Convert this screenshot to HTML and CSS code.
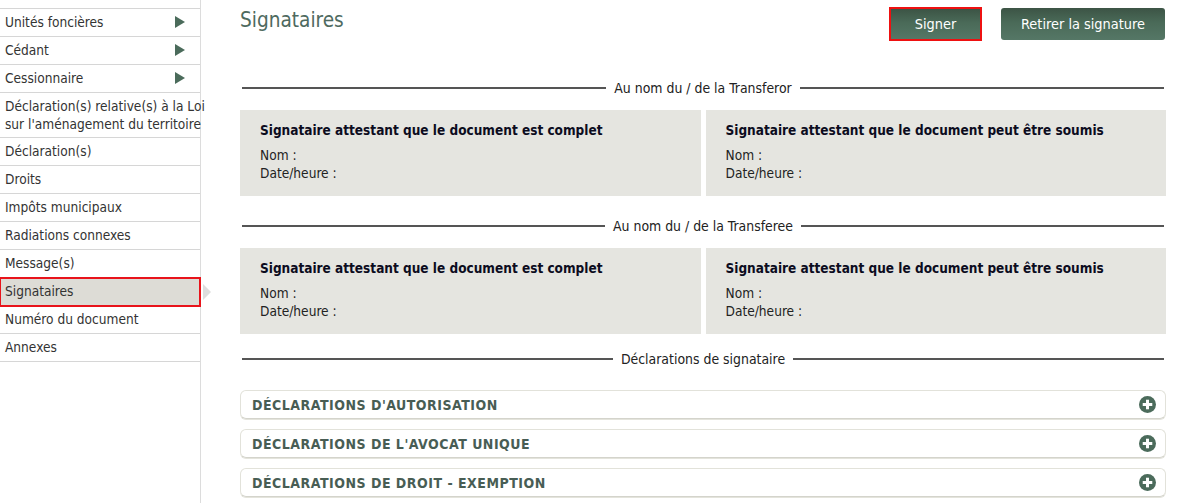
FILE: index.html
```html
<!DOCTYPE html>
<html lang="fr">
<head>
<meta charset="utf-8">
<title>Signataires</title>
<link rel="stylesheet" href="styles.css">
</head>
<body>
<div class="page">
  <nav class="sidebar">
    <ul class="nav">
      <li class="nav-item has-sub">Unités foncières<span class="tri"></span></li>
      <li class="nav-item has-sub">Cédant<span class="tri"></span></li>
      <li class="nav-item has-sub">Cessionnaire<span class="tri"></span></li>
      <li class="nav-item two-line">Déclaration(s) relative(s) à la Loi<br>sur l'aménagement du territoire</li>
      <li class="nav-item">Déclaration(s)</li>
      <li class="nav-item">Droits</li>
      <li class="nav-item">Impôts municipaux</li>
      <li class="nav-item">Radiations connexes</li>
      <li class="nav-item">Message(s)</li>
      <li class="nav-item active">Signataires<span class="pointer"></span></li>
      <li class="nav-item">Numéro du document</li>
      <li class="nav-item">Annexes</li>
    </ul>
  </nav>
  <main class="main">
    <div class="header">
      <h1 class="title">Signataires</h1>
      <div class="actions">
        <button class="btn btn-focus">Signer</button>
        <button class="btn">Retirer la signature</button>
      </div>
    </div>

    <div class="divider first"><span>Au nom du / de la Transferor</span></div>
    <div class="cards">
      <div class="card">
        <div class="card-title">Signataire attestant que le document est complet</div>
        <div class="card-line">Nom :</div>
        <div class="card-line">Date/heure :</div>
      </div>
      <div class="card">
        <div class="card-title">Signataire attestant que le document peut être soumis</div>
        <div class="card-line">Nom :</div>
        <div class="card-line">Date/heure :</div>
      </div>
    </div>

    <div class="divider"><span>Au nom du / de la Transferee</span></div>
    <div class="cards">
      <div class="card">
        <div class="card-title">Signataire attestant que le document est complet</div>
        <div class="card-line">Nom :</div>
        <div class="card-line">Date/heure :</div>
      </div>
      <div class="card">
        <div class="card-title">Signataire attestant que le document peut être soumis</div>
        <div class="card-line">Nom :</div>
        <div class="card-line">Date/heure :</div>
      </div>
    </div>

    <div class="divider last"><span>Déclarations de signataire</span></div>
    <div class="accordions">
      <div class="acc">
        <span class="acc-title">DÉCLARATIONS D'AUTORISATION</span>
        <svg class="plus" viewBox="0 0 16 16" width="17" height="17"><circle cx="8" cy="8" r="8" fill="#4b6b5b"/><rect x="3.5" y="6.6" width="9" height="2.8" fill="#fff"/><rect x="6.6" y="3.5" width="2.8" height="9" fill="#fff"/></svg>
      </div>
      <div class="acc">
        <span class="acc-title">DÉCLARATIONS DE L'AVOCAT UNIQUE</span>
        <svg class="plus" viewBox="0 0 16 16" width="17" height="17"><circle cx="8" cy="8" r="8" fill="#4b6b5b"/><rect x="3.5" y="6.6" width="9" height="2.8" fill="#fff"/><rect x="6.6" y="3.5" width="2.8" height="9" fill="#fff"/></svg>
      </div>
      <div class="acc">
        <span class="acc-title">DÉCLARATIONS DE DROIT - EXEMPTION</span>
        <svg class="plus" viewBox="0 0 16 16" width="17" height="17"><circle cx="8" cy="8" r="8" fill="#4b6b5b"/><rect x="3.5" y="6.6" width="9" height="2.8" fill="#fff"/><rect x="6.6" y="3.5" width="2.8" height="9" fill="#fff"/></svg>
      </div>
    </div>
  </main>
</div>
</body>
</html>
```

FILE: styles.css
```css
html, body {
  margin: 0;
  padding: 0;
  background: #fff;
}
body {
  font-family: "DejaVu Sans Condensed", "DejaVu Sans", sans-serif;
  font-size: 13.6px;
  color: #222;
  overflow: hidden;
}
.page {
  display: flex;
  align-items: flex-start;
  min-height: 503px;
}
.sidebar {
  width: 200px;
  min-height: 503px;
  border-right: 1px solid #dcdcdc;
  padding-top: 8px;
  flex: none;
}
.nav {
  list-style: none;
  margin: 0;
  padding: 0;
  border-top: 1px solid #d6d6d6;
}
.nav-item {
  position: relative;
  height: 27px;
  line-height: 27px;
  padding-left: 5px;
  border-bottom: 1px solid #d6d6d6;
  color: #333;
  white-space: nowrap;
}
.nav-item.two-line {
  height: auto;
  line-height: 18px;
  padding-top: 4px;
  padding-bottom: 4px;
}
.tri {
  position: absolute;
  right: 15px;
  top: 7px;
  width: 0;
  height: 0;
  border-top: 6px solid transparent;
  border-bottom: 6px solid transparent;
  border-left: 10px solid #4b6b5b;
}
.nav-item.active {
  background: #dddcd6;
  outline: 2px solid #e8141b;
  outline-offset: -1px;
  z-index: 1;
}
.pointer {
  position: absolute;
  right: -11px;
  top: 6px;
  width: 0;
  height: 0;
  border-top: 8px solid transparent;
  border-bottom: 8px solid transparent;
  border-left: 8px solid #dedede;
}
.main {
  width: 926px;
  margin-left: 39px;
}
.header {
  display: flex;
  justify-content: space-between;
  align-items: flex-start;
  padding-top: 7px;
  height: 34px;
}
.title {
  margin: 0;
  margin-top: 1px;
  font-weight: normal;
  font-size: 20.6px;
  line-height: 24px;
  color: #4e6a60;
}
.actions {
  display: flex;
  gap: 21px;
  align-items: flex-start;
}
.btn {
  font-family: inherit;
  font-size: 14.4px;
  color: #fff;
  border: 0;
  border-radius: 3px;
  height: 32px;
  padding: 0 20px;
  background: linear-gradient(#3c5445, #4a6a58 45%, #557766);
  margin-top: 1px;
  margin-right: 1px;
}
.btn-focus {
  border-radius: 0;
  width: 89px;
  height: 30px;
  padding: 0;
  margin-top: 2px;
  outline: 2px solid #ee1111;
  outline-offset: 0;
  margin-right: 0;
}
.divider {
  display: flex;
  align-items: center;
  gap: 8px;
  height: 16px;
  line-height: 16px;
  padding: 0 2px;
  margin: 22px 0 14px;
  color: #222;
  font-size: 13.9px;
}
.divider.first {
  margin-top: 39px;
}
.divider.last {
  margin-top: 17px;
  margin-bottom: 23px;
}
.divider::before,
.divider::after {
  content: "";
  flex: 1;
  height: 2px;
  background: #555;
}
.cards {
  display: grid;
  grid-template-columns: 1fr 1fr;
  gap: 5px;
}
.card {
  background: #e5e5e0;
  padding: 11px 20px 14px;
}
.card-title {
  font-weight: bold;
  font-size: 13.5px;
  line-height: 18px;
  color: #0c0c1e;
  margin-bottom: 7px;
}
.card-line {
  line-height: 18px;
  color: #222;
}
.accordions {
  display: flex;
  flex-direction: column;
  gap: 10px;
}
.acc {
  display: flex;
  align-items: center;
  justify-content: space-between;
  height: 27px;
  border: 1px solid #e2e2da;
  border-bottom-color: #d4d4cc;
  box-shadow: 0 1px 0 #e4e4dc;
  border-radius: 6px;
  padding: 0 9px 0 11px;
}
.acc-title {
  font-weight: bold;
  font-size: 14px;
  color: #485d54;
  letter-spacing: 0.5px;
}
.plus {
  display: block;
}
```
